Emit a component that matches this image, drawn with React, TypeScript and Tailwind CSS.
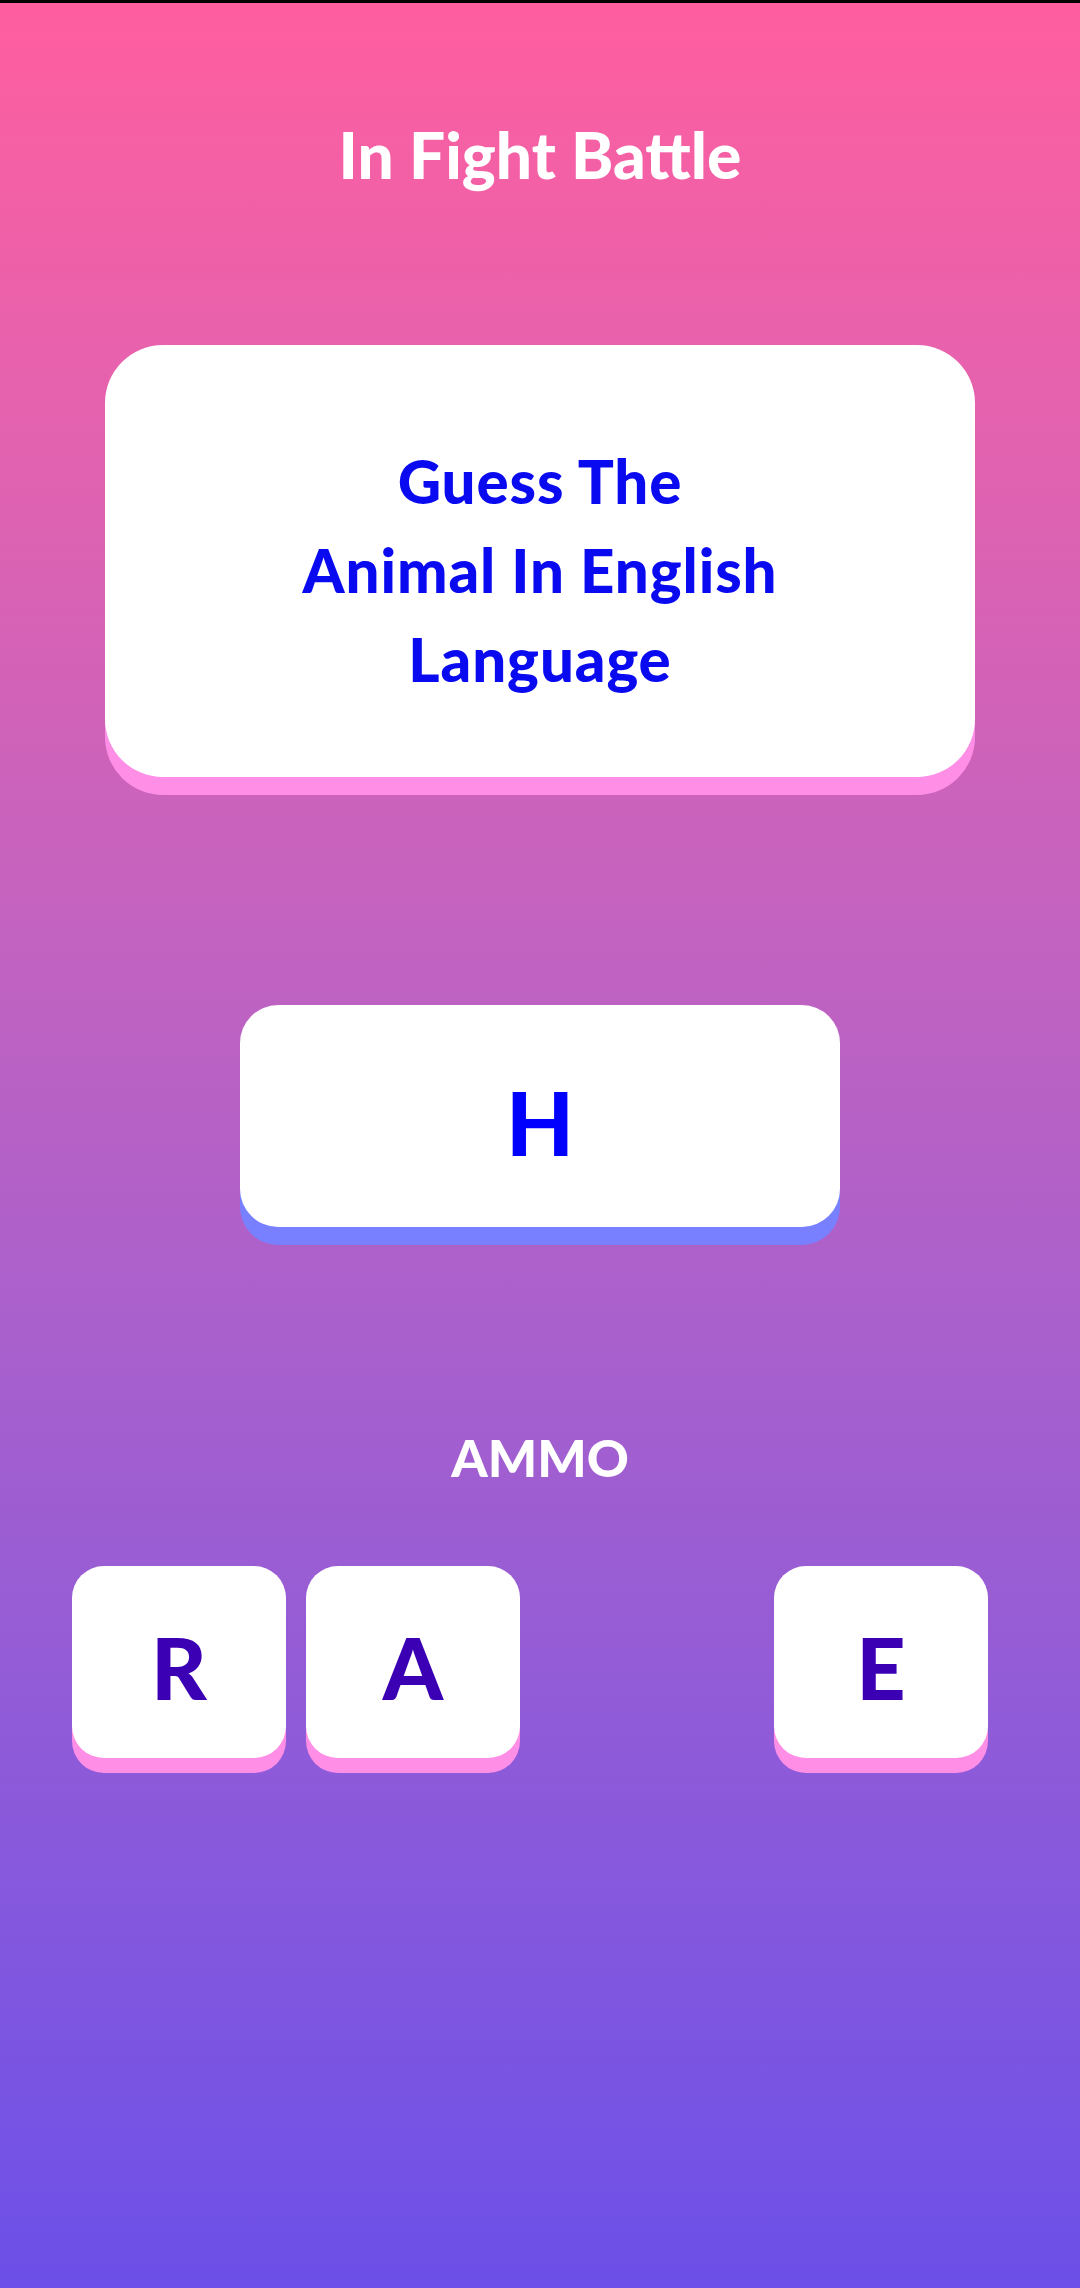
const letters = ["R", "A", "", "E"];

export default function App() {
  return (
    <div
      className="relative w-[1080px] h-[2288px] overflow-hidden bg-gradient-to-b from-[#ff5e9f] to-[#6c4fe8] flex flex-col items-center"
      style={{ fontFamily: "Lato, 'Open Sans', sans-serif" }}
    >
      <div className="w-full h-[3px] bg-black" />

      <h1 className="mt-[120px] text-[64px] leading-none font-black text-white">In Fight Battle</h1>

      <div className="mt-[158px] w-[870px] h-[432px] rounded-[58px] bg-white shadow-[0_18px_0_#ff8fe6] flex flex-col items-center pt-[92px]">
        <p className="text-[60px] leading-[89px] font-black tracking-[0.015em] text-[#0a0af0] text-center">
          Guess The
          <br />
          Animal In English
          <br />
          Language
        </p>
      </div>

      <div className="mt-[228px] w-[600px] h-[222px] rounded-[38px] bg-white shadow-[0_18px_0_#7880ff] flex items-center justify-center pt-[12px]">
        <span className="text-[88px] leading-none font-black text-[#0000ff]">H</span>
      </div>

      <h2 className="mt-[204px] text-[52px] leading-none font-black text-white">AMMO</h2>

      <div className="mt-[83px] w-full pl-[72px] flex gap-[20px]">
        {letters.map((l, i) =>
          l ? (
            <div
              key={i}
              className="w-[214px] h-[192px] rounded-[32px] bg-white shadow-[0_15px_0_#ff8fe6] flex items-center justify-center pt-[9px]"
            >
              <span className="text-[86px] leading-none font-black text-[#3c00b4]">{l}</span>
            </div>
          ) : (
            <div key={i} className="w-[214px] h-[192px]" />
          )
        )}
      </div>
    </div>
  );
}
